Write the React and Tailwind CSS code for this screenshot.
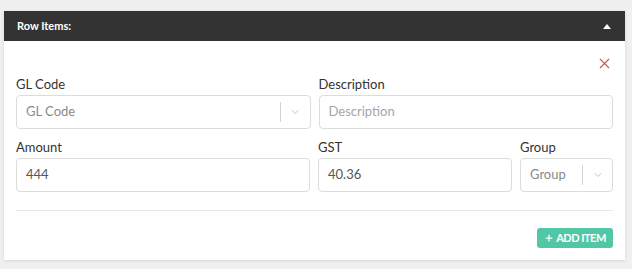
import { ChevronDown, X, Plus } from "lucide-react";

function Label({ children }) {
  return (
    <div className="text-[13px] leading-[19px] text-[#333] mb-[1px]">{children}</div>
  );
}

function TextInput({ value, placeholder }) {
  return (
    <div className="h-[34px] border border-[#dcdcdc] rounded-[4px] flex items-center px-[9px] text-[13px] bg-white">
      {value ? (
        <span className="text-[#555]">{value}</span>
      ) : (
        <span className="text-[#a6a6a6]">{placeholder}</span>
      )}
    </div>
  );
}

function SelectBox({ placeholder }) {
  return (
    <div className="h-[34px] border border-[#dcdcdc] rounded-[4px] flex items-center pl-[9px] text-[13px] bg-white">
      <span className="flex-1 text-[#8a8a8a] truncate">{placeholder}</span>
      <span className="w-px h-[20px] bg-[#d4d4d4]" />
      <span className="w-[29px] flex justify-center">
        <ChevronDown className="w-[12px] h-[12px] text-[#c4c4c4]" strokeWidth={2} />
      </span>
    </div>
  );
}

export default function App() {
  return (
    <div className="min-h-screen bg-[#f0f0f0] pt-[11px] pl-[4px] font-['Lato','Liberation_Sans',sans-serif]">
      <div className="w-[621px] bg-white shadow-[0_1px_3px_rgba(0,0,0,0.12)]">
        <div className="h-[30px] bg-[#333333] flex items-center justify-between pl-[13px] pr-[14px]">
          <span className="text-[11px] font-bold text-white">Row Items:</span>
          <span className="w-0 h-0 border-l-[4px] border-r-[4px] border-b-[5px] border-l-transparent border-r-transparent border-b-white" />
        </div>

        <div className="px-[12px] pt-[14px] pb-[12px]">
          <div className="flex justify-end h-[15px]">
            <X className="w-[17px] h-[17px] text-[#d9534f]" strokeWidth={1.6} />
          </div>

          <div className="flex gap-[8px] mt-[5px]">
            <div className="flex-1">
              <Label>GL Code</Label>
              <SelectBox placeholder="GL Code" />
            </div>
            <div className="flex-1">
              <Label>Description</Label>
              <TextInput placeholder="Description" />
            </div>
          </div>

          <div className="flex gap-[8px] mt-[9px]">
            <div className="w-[294px]">
              <Label>Amount</Label>
              <TextInput value="444" />
            </div>
            <div className="flex-1">
              <Label>GST</Label>
              <TextInput value="40.36" />
            </div>
            <div className="w-[93px]">
              <Label>Group</Label>
              <SelectBox placeholder="Group" />
            </div>
          </div>

          <div className="mt-[18px] border-t border-[#e8e8e8]" />

          <div className="flex justify-end mt-[17px]">
            <button className="h-[20px] w-[76px] rounded-[3px] bg-[#52c7a6] text-white text-[11px] font-bold flex items-center justify-center gap-[2px] tracking-[-0.5px]">
              <Plus className="w-[10px] h-[10px]" strokeWidth={3} />
              ADD ITEM
            </button>
          </div>
        </div>
      </div>
    </div>
  );
}
